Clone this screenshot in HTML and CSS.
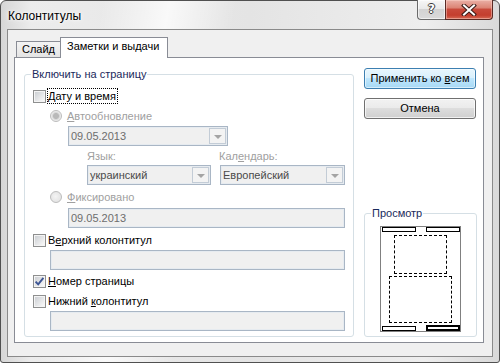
FILE: index.html
```html
<!DOCTYPE html>
<html lang="ru">
<head>
<meta charset="utf-8">
<title>Колонтитулы</title>
<link rel="stylesheet" href="styles.css">
</head>
<body>
<div class="window">
  <div class="titlebar">
    <span class="title">Колонтитулы</span>
    <div class="caption">
      <div class="cap-help">?</div>
      <div class="cap-close">
        <svg width="16" height="12" viewBox="0 0 16 12">
          <path d="M3 1.5 L13 10.5 M13 1.5 L3 10.5" stroke="#3a1a16" stroke-width="4" stroke-linecap="square" fill="none"/>
          <path d="M3 1.5 L13 10.5 M13 1.5 L3 10.5" stroke="#ffffff" stroke-width="2" stroke-linecap="square" fill="none"/>
        </svg>
      </div>
    </div>
  </div>
  <div class="client">
    <div class="tabs">
      <div class="tab">Слайд</div>
      <div class="tab active">Заметки и выдачи</div>
    </div>
    <div class="panel">
      <fieldset class="group main">
        <legend>Включить на страницу</legend>
        <div class="row r-date">
          <span class="cb"></span>
          <span class="lbl focus"><u>Д</u>ату и время</span>
        </div>
        <div class="row radio-row r-auto disabled">
          <span class="rb on"></span>
          <span class="lbl"><u>А</u>втообновление</span>
        </div>
        <div class="combo c-date">
          <span class="val">09.05.2013</span>
          <span class="drop"><span class="tri"></span></span>
        </div>
        <div class="langgrid">
          <span class="lbl disabled">Язык:</span>
          <span class="lbl disabled">Кал<u>е</u>ндарь:</span>
          <div class="combo">
            <span class="val dark">украинский</span>
            <span class="drop"><span class="tri"></span></span>
          </div>
          <div class="combo">
            <span class="val dark">Европейский</span>
            <span class="drop"><span class="tri"></span></span>
          </div>
        </div>
        <div class="row radio-row r-fixed disabled">
          <span class="rb"></span>
          <span class="lbl"><u>Ф</u>иксировано</span>
        </div>
        <div class="field f-fixed">09.05.2013</div>
        <div class="row r-header">
          <span class="cb"></span>
          <span class="lbl">В<u>е</u>рхний колонтитул</span>
        </div>
        <div class="field f-header"></div>
        <div class="row r-num">
          <span class="cb checked">
            <svg width="11" height="11" viewBox="0 0 11 11"><path d="M1.6 5.6 L4.2 8.4 L9.4 1.8" stroke="#3d5594" stroke-width="1.9" fill="none"/></svg>
          </span>
          <span class="lbl"><u>Н</u>омер страницы</span>
        </div>
        <div class="row r-footer">
          <span class="cb"></span>
          <span class="lbl">Нижний <u>к</u>олонтитул</span>
        </div>
        <div class="field f-footer"></div>
      </fieldset>
      <div class="side">
        <div class="btn default">Применить ко <u>в</u>сем</div>
        <div class="btn">Отмена</div>
        <fieldset class="group preview">
          <legend>Просмотр</legend>
          <div class="page">
            <span class="bar tl"></span>
            <span class="bar tr"></span>
            <span class="dash upper"></span>
            <span class="dash lower"></span>
            <span class="bar bl"></span>
            <span class="bar br"></span>
          </div>
        </fieldset>
      </div>
    </div>
  </div>
</div>
</body>
</html>
```
FILE: styles.css
```css
* { box-sizing: border-box; }
html, body { margin: 0; padding: 0; }
body {
  width: 500px;
  height: 363px;
  overflow: hidden;
  font-family: "Liberation Sans", Arial, sans-serif;
  font-size: 11px;
  color: #000;
  background: #fff;
}
u { text-decoration: underline; text-underline-offset: 1px; }

.window {
  width: 500px;
  height: 363px;
  border: 1px solid #505050;
  border-radius: 6px 6px 3px 3px;
  padding: 0 6px 5px 6px;
  display: flex;
  flex-direction: column;
  background:
    linear-gradient(100deg, rgba(255,255,255,0) 18%, rgba(255,255,255,0.75) 30%, rgba(255,255,255,0) 42%),
    linear-gradient(90deg, #d6d6d6 0%, #ececec 6%, #e4e4e4 50%, #eeeeee 85%, #d9d9d9 100%);
}

.titlebar {
  height: 28px;
  display: flex;
  align-items: flex-start;
  padding-left: 1px;
}
.title {
  margin-top: 8px;
  font-size: 12px;
  line-height: 14px;
  color: #000;
  text-shadow: 0 0 6px #fff, 0 0 3px #fff;
}
.caption {
  margin-left: auto;
  margin-top: -1px;
  display: flex;
}
.cap-help {
  width: 28px;
  height: 20px;
  border: 1px solid #6a6a6a;
  border-top: 0;
  border-right: 0;
  border-radius: 0 0 0 4px;
  background: linear-gradient(#f7f7f7 0%, #e9e9e9 45%, #d3d3d3 50%, #dadada 100%);
  box-shadow: inset 0 0 0 1px rgba(255,255,255,0.6);
  text-align: center;
  font-family: "DejaVu Sans", sans-serif;
  font-weight: bold;
  font-size: 12px;
  line-height: 18px;
  color: #fff;
  text-shadow: 1px 0 0 #3a3a3a, -1px 0 0 #3a3a3a, 0 1px 0 #3a3a3a, 0 -1px 0 #3a3a3a;
}
.cap-close {
  width: 48px;
  height: 20px;
  border: 1px solid #5a2a24;
  border-top: 0;
  border-radius: 0 0 4px 0;
  background: linear-gradient(#eab0a6 0%, #dc8576 40%, #c8493a 50%, #c43e2e 80%, #d66a55 100%);
  box-shadow: inset 0 0 0 1px rgba(255,220,210,0.45);
  display: flex;
  align-items: center;
  justify-content: center;
}

.client {
  height: 328px;
  border: 1px solid #8a8a8a;
  background: #f0f0f0;
  padding: 7px 8px 0 6px;
  display: flex;
  flex-direction: column;
}

.tabs {
  height: 20px;
  display: flex;
  align-items: flex-end;
  padding-left: 2px;
}
.tab {
  height: 16px;
  border: 1px solid #898c95;
  border-bottom: 0;
  padding: 0 5px;
  line-height: 15px;
  background: linear-gradient(#f4f4f4, #e4e4e4);
}
.tab.active {
  height: 21px;
  margin-left: -1px;
  margin-bottom: -1px;
  padding: 1px 8px 0 6px;
  background: #fff;
  position: relative;
  z-index: 1;
}

.panel {
  border: 1px solid #898c95;
  background: #fff;
  padding: 9px 6px 5px 9px;
  display: flex;
  gap: 10px;
}

.group {
  margin: 0;
  min-width: 0;
  border: 1px solid #d5dfe5;
  border-radius: 3px;
}
.group legend {
  padding: 0 1px;
  line-height: 14px;
  color: #1a2a5c;
}
.main {
  width: 330px;
  padding: 7px 8px 5px 8px;
  display: flex;
  flex-direction: column;
}
.main legend { margin-left: -2px; }

.row {
  height: 16px;
  display: flex;
  align-items: center;
}
.lbl { line-height: 16px; white-space: nowrap; }
.disabled, .disabled .lbl { color: #a0a0a0; }

.cb {
  width: 13px;
  height: 13px;
  flex: none;
  border: 1px solid #8e8f8f;
  padding: 1px;
  background: linear-gradient(135deg, #cdd0d4, #f8f8f8) content-box, #f4f4f4;
  display: flex;
  align-items: center;
  justify-content: center;
}
.cb svg { display: block; margin: -1px; }
.row .cb + .lbl { margin-left: 2px; }
.row .lbl.focus {
  margin-left: 1px;
  padding: 0 1px 0 0;
  border: 1px dotted #000;
  line-height: 14px;
}

.radio-row { margin-left: 17px; }
.rb {
  width: 12px;
  height: 12px;
  flex: none;
  border-radius: 50%;
  border: 1px solid #bcbcbc;
  background: radial-gradient(circle at 45% 45%, #f4f4f4, #dedede);
}
.rb.on {
  background: radial-gradient(circle, #b9b9b9 0 2.6px, #d2d2d2 3.2px, #e9e9e9 4.4px, #f2f2f2 5px);
}
.radio-row .lbl { margin-left: 5px; }

.combo, .field {
  height: 20px;
  border: 1px solid #a9b6c5;
  box-shadow: inset 0 0 0 1px #e6ebf0;
  background: #f0f0f0;
  color: #6d6d6d;
}
.combo {
  display: flex;
  align-items: center;
  padding-left: 2px;
}
.val { line-height: 18px; white-space: nowrap; }
.val.dark { color: #4a4a4a; }
.drop {
  margin-left: auto;
  margin-right: 1px;
  width: 17px;
  height: 16px;
  border: 1px solid #c3ccd6;
  background: #f3f3f3;
  display: flex;
  align-items: center;
  justify-content: center;
}
.tri {
  width: 0;
  height: 0;
  border-left: 4px solid transparent;
  border-right: 4px solid transparent;
  border-top: 4px solid #a4a4a4;
  margin-top: 1px;
}
.field {
  padding-left: 2px;
  line-height: 18px;
}

.r-date { margin-top: 0; }
.r-auto { margin-top: 4px; }
.c-date { margin-top: 2px; margin-left: 35px; width: 160px; }
.langgrid {
  margin-top: 3px;
  margin-left: 54px;
  display: grid;
  grid-template-columns: 124px 125px;
  column-gap: 9px;
  row-gap: 2px;
}
.langgrid > .lbl { line-height: 14px; }
.langgrid > .lbl:nth-child(2) { margin-left: -1px; }
.r-fixed { margin-top: 4px; }
.f-fixed { margin-top: 3px; margin-left: 35px; }
.r-header { margin-top: 4px; }
.f-header { margin-top: 2px; margin-left: 17px; }
.r-num { margin-top: 3px; }
.r-footer { margin-top: 4px; }
.f-footer { margin-top: 2px; margin-left: 17px; }

.side {
  width: 113px;
  display: flex;
  flex-direction: column;
}
.btn {
  width: 112px;
  height: 21px;
  border: 1px solid #707070;
  border-radius: 3px;
  background: linear-gradient(#f2f2f2 0%, #ebebeb 45%, #dddddd 50%, #cfcfcf 100%);
  box-shadow: inset 0 0 0 1px rgba(255,255,255,0.7);
  text-align: center;
  line-height: 19px;
  white-space: nowrap;
}
.btn.default {
  margin-top: 1px;
  border-color: #3c7fb1;
  background: linear-gradient(#e8f6fd 0%, #d9f0fc 45%, #bee6fd 50%, #a7d9f5 100%);
  box-shadow: inset 0 0 0 1px rgba(255,255,255,0.55);
}
.btn + .btn { margin-top: 9px; }

.preview {
  margin-top: auto;
  padding: 6px 6px 4px 6px;
}
.page {
  width: 81px;
  height: 106px;
  margin: 0 auto;
  border: 1px solid #808080;
  position: relative;
}
.bar {
  position: absolute;
  width: 34px;
  height: 5px;
  border: 1px solid #000;
  background: #fff;
}
.bar.tl { left: 1px; top: 0; }
.bar.tr { left: 45px; top: 0; }
.bar.bl { left: 1px; top: 99px; }
.bar.br { left: 45px; top: 98px; height: 6px; border-width: 2px; }
.dash {
  position: absolute;
  border: 1px dashed #000;
}
.dash.upper { left: 13px; top: 8px; width: 53px; height: 39px; }
.dash.lower { left: 8px; top: 49px; width: 63px; height: 47px; }
```
